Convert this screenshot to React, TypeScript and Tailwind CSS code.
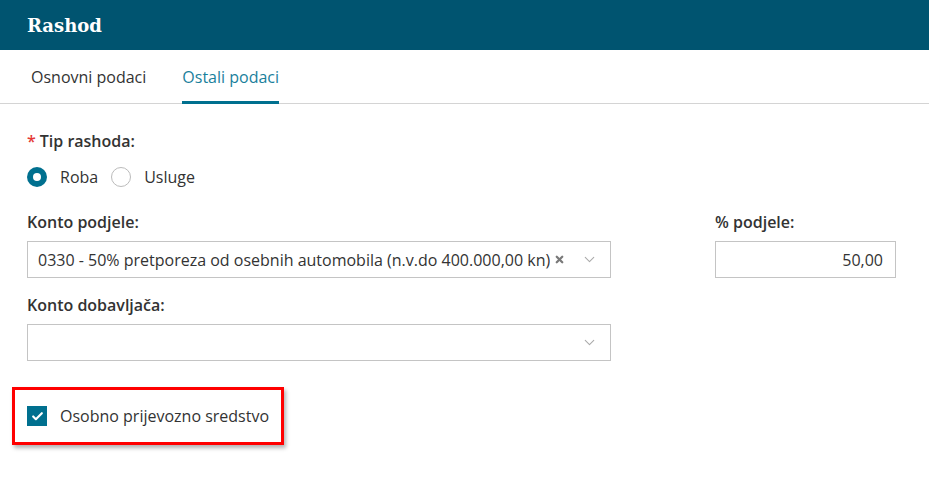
import { Check, ChevronDown, X } from 'lucide-react'

const font = { fontFamily: '"Open Sans", "Liberation Sans", sans-serif' }

function Select({ value }: { value?: string }) {
  return (
    <div className="flex h-[37px] w-[584px] items-center border border-[#c4c4c4] bg-white pl-[10px] pr-[12px]">
      <span className="truncate text-[16px] leading-[24px] text-[#333]">{value}</span>
      {value && <X className="ml-[4px] h-[11px] w-[11px] text-[#7a7a7a]" strokeWidth={5} />}
      <span className="flex-1" />
      <ChevronDown className="h-[17px] w-[17px] text-[#aaa]" strokeWidth={1.5} />
    </div>
  )
}

export default function App() {
  return (
    <div className="min-h-[499px] w-[929px] bg-white" style={font}>
      {/* naslov */}
      <header className="flex h-[50px] items-center bg-[#005470] px-[27px]">
        <h1
          className="text-[18px] font-bold text-white"
          style={{ fontFamily: '"DejaVu Serif", "Liberation Serif", serif' }}
        >
          Rashod
        </h1>
      </header>

      {/* tabovi */}
      <nav className="flex h-[54px] items-stretch border-b border-[#d4d4d4] pl-[31px]">
        <button className="text-[16px] text-[#333]">Osnovni podaci</button>
        <button className="ml-[36px] -mb-px border-b-[3px] border-[#00708f] pt-[3px] text-[16px] text-[#1a7f9c]">
          Ostali podaci
        </button>
      </nav>

      <div className="px-[27px] pt-[25px] text-[16px] leading-[24px]">
        <div className="font-semibold text-[#333]">
          <span className="mr-[4px] text-[#e53935]">*</span>Tip rashoda:
        </div>

        <div className="mt-[12px] flex items-center text-[#333]">
          <span className="flex h-[20px] w-[20px] items-center justify-center rounded-full bg-[#00708f]">
            <span className="h-[8px] w-[8px] rounded-full bg-white" />
          </span>
          <span className="ml-[13px]">Roba</span>
          <span className="ml-[13px] h-[20px] w-[20px] rounded-full border border-[#bbb] bg-white" />
          <span className="ml-[13px]">Usluge</span>
        </div>

        <div className="mt-[21px] flex">
          <div>
            <div className="mb-[7px] font-semibold text-[#333]">Konto podjele:</div>
            <Select value="0330 - 50% pretporeza od osebnih automobila (n.v.do 400.000,00 kn)" />
            <div className="mb-[7px] mt-[15px] font-semibold text-[#333]">Konto dobavljača:</div>
            <Select />
          </div>
          <div className="ml-[104px]">
            <div className="mb-[7px] font-semibold text-[#333]">% podjele:</div>
            <div className="flex h-[37px] w-[181px] items-center justify-end border border-[#c4c4c4] pr-[12px] text-[#333]">
              50,00
            </div>
          </div>
        </div>
      </div>

      {/* oznaceno polje */}
      <div className="ml-[12px] mt-[26px] flex h-[58px] w-[272px] items-center border-[3px] border-[#ff0000] pl-[12px] shadow-[2px_3px_4px_rgba(0,0,0,0.3)]">
        <span className="flex h-[20px] w-[20px] items-center justify-center bg-[#00708f]">
          <Check className="h-[13px] w-[13px] text-white" strokeWidth={4} />
        </span>
        <span className="ml-[13px] text-[16px] text-[#333]">Osobno prijevozno sredstvo</span>
      </div>
    </div>
  )
}
